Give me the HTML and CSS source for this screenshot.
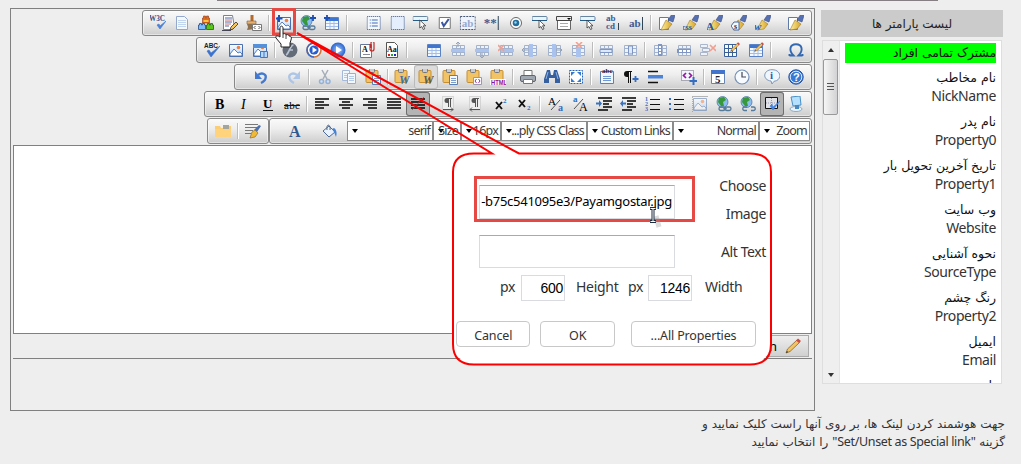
FILE: index.html
```html
<!DOCTYPE html>
<html lang="fa">
<head>
<meta charset="utf-8">
<title>Editor</title>
<link rel="stylesheet" href="styles.css">
</head>
<body>
<svg class="paints" aria-hidden="true">
  <defs>
    <linearGradient id="sky" x1="0" y1="0" x2="0" y2="1"><stop offset="0" stop-color="#fff"/><stop offset="1" stop-color="#a9cdf6"/></linearGradient>
    <radialGradient id="ball"><stop offset="0" stop-color="#9cc8ff"/><stop offset="1" stop-color="#2a62cc"/></radialGradient>
    <linearGradient id="gold" x1="0" y1="0" x2="1" y2="0"><stop offset="0" stop-color="#fff0a0"/><stop offset="1" stop-color="#d8a428"/></linearGradient>
  </defs>
</svg>
<svg class="sprite" aria-hidden="true">
  <symbol id="w3c" viewBox="0 0 16 16"><text x="-1" y="6" font-size="8" class="sb" textLength="16" lengthAdjust="spacingAndGlyphs" fill="#3a4f86">W3C</text><path d="M7 10l3 4 6-8-6 5-1-2z" fill="#4a80d8" stroke="#4a80d8" stroke-width=".7"/></symbol>
  <symbol id="abc" viewBox="0 0 16 16"><text x="0" y="6" font-size="7.500" class="ss b" textLength="14" lengthAdjust="spacingAndGlyphs" fill="#222">ABC</text><path d="M3 9l4 6 9-11-9 7-2-3z" fill="#3a72d0" stroke="#3a72d0" stroke-width=".6"/></symbol>
  <symbol id="doc" viewBox="0 0 16 16"><path d="M2.500 1.500h8l3 3v10h-11z" fill="#f4f9ff" stroke="#93a8cc"/><path d="M5 5v8M7 5v8M9 5v8M11 5v8" stroke="#8fb0e0" stroke-dasharray="1 1"/></symbol>
  <symbol id="bricks" viewBox="0 0 16 16"><path d="M4.500 3h1V1h2v2h1V1h2v2h1v5h-7z" fill="#e06a20" stroke="#8a3a20" stroke-width=".6"/><path d="M5.500 5h5v2h-5z" fill="#ffc33a"/><path d="M.5 10h1V8.500h2V10h1V8.500h2V10h1v4.500h-7z" fill="#7dbcff" stroke="#234a86" stroke-width=".8"/><path d="M8.500 10h1V8.500h2V10h1V8.500h2V10h1v4.500h-7z" fill="#59c519" stroke="#236010" stroke-width=".8"/></symbol>
  <symbol id="note" viewBox="0 0 16 16"><path d="M1.500.5h9l2 12-2 2h-9z" fill="#fff" stroke="#7a8190"/><path d="M3 3h7M3 7h7M3 11h4" stroke="#4a67a8"/><path d="M3 5h7M3 9h6" stroke="#d07070"/><path d="M8 15l1-3 5-5 2 2-5 5z" fill="#f5c75a" stroke="#3d3020" stroke-width=".8"/><path d="M0 15.500h9" stroke="#445"/></symbol>
  <symbol id="brushcode" viewBox="0 0 16 16"><path d="M4.500-1h3v7h-3z" fill="#b46a2a"/><path d="M1 6h9v3H1z" fill="#e6b070" stroke="#8a5a28" stroke-width=".6"/><path d="M1 9h9l-1 5-8 1 1-3z" fill="#8d7050"/><path d="M6.500 9.500h9v6h-9z" fill="#fff" stroke="#777"/><path d="M9.500 11L8 12.500 9.500 14M12.500 11l1.500 1.500-1.500 1.500" fill="none" stroke="#222" stroke-width=".8"/></symbol>
  <symbol id="pic" viewBox="0 0 16 16"><path d="M1.500 2.500h13v12h-13z" fill="url(#sky)" stroke="#4b6fae"/><path d="M2 12l4-5 4 4 2-1 2 2v2H2z" fill="#fff" stroke="#4773b5" stroke-width=".9"/><circle cx="10.500" cy="5.500" r="1.800" fill="#ef8040"/></symbol>
  <symbol id="addpic" viewBox="0 0 16 16"><use href="#pic"/><path d="M3 0v7M-.5 3.500h7" stroke="#1d4fb4" stroke-width="2"/></symbol>
  <symbol id="pic2" viewBox="0 0 16 16"><use href="#pic"/><path d="M1 2h14v4H1z" fill="#5590d8"/><path d="M8.500 9.500h7v6h-7zM12 9.500v6" fill="#b9d8fb" stroke="#3e78c4"/></symbol>
  <symbol id="globelink" viewBox="0 0 16 16"><circle cx="6.500" cy="6" r="5.500" fill="#8bbcf0" stroke="#467090" stroke-width=".7"/><path d="M3 2l5-1 2 3-3 2 1 4-3 0-3-4z" fill="#36983a"/><rect x="3" y="11" width="6" height="3.500" rx="1.700" fill="none" stroke="#547b9c" stroke-width="1.300"/><rect x="9" y="11" width="6" height="3.500" rx="1.700" fill="none" stroke="#547b9c" stroke-width="1.300"/><path d="M7 12.800h4" stroke="#547b9c"/></symbol>
  <symbol id="addlink" viewBox="0 0 16 16"><use href="#globelink"/><path d="M13 0v6M10 3h6" stroke="#1d4fb4" stroke-width="1.800"/></symbol>
  <symbol id="unlink" viewBox="0 0 16 16"><circle cx="6.500" cy="6" r="5.500" fill="#8bbcf0" stroke="#467090" stroke-width=".7"/><path d="M3 2l5-1 2 3-3 2 1 4-3 0-3-4z" fill="#36983a"/><path d="M7 11H4.500a1.500 1.500 0 000 3.500H7M11 11h2.500a1.500 1.500 0 010 3.500H11" fill="none" stroke="#547b9c" stroke-width="1.300"/></symbol>
  <symbol id="table" viewBox="0 0 16 16"><path d="M1.500 2.500h13v12h-13z" fill="#f4f9ff" stroke="#5b82c2"/><path d="M2 3h12v3H2z" fill="#3d76d2"/><path d="M2 8.500h12M2 11.500h12M6 6v8M10 6v8" stroke="#a3bfe8"/></symbol>
  <symbol id="addtable" viewBox="0 0 16 16"><use href="#table"/><path d="M3 0v6M0 3h6" stroke="#1d4fb4" stroke-width="1.800"/></symbol>
  <symbol id="form" viewBox="0 0 16 16"><path d="M1.500 1.500h13v13h-13z" fill="#f4f8ff" stroke="#35568f" stroke-dasharray="1 1"/><path d="M4 5h1M4 8h1M4 11h1M6 5h6M6 8h6M6 11h6" stroke="#3e6cb8"/></symbol>
  <symbol id="frame" viewBox="0 0 16 16"><path d="M1.500 1.500h13v13h-13z" fill="#e4eefc" stroke="#35568f" stroke-dasharray="1 1"/></symbol>
  <symbol id="btn" viewBox="0 0 16 16"><rect x="0" y="1.500" width="15" height="4" rx="1" fill="#eaf4ff" stroke="#6585a0"/><path d="M0 5.500h15" stroke="#245a83"/><path d="M7 5v8l2-1.500 1.500 3 1.500-.7-1.500-3H13z" fill="#fff" stroke="#333" stroke-width=".8"/></symbol>
  <symbol id="check" viewBox="0 0 16 16"><path d="M2.500 2.500h11v11h-11z" fill="#fff" stroke="#777"/><path d="M5 7l2 4 5-7" fill="none" stroke="#3a57a0" stroke-width="2"/></symbol>
  <symbol id="hidden" viewBox="0 0 16 16"><path d="M.5 1.500h15v13H.5z" fill="#eef3fc" stroke="#445577" stroke-dasharray="2 1"/><text x="2" y="12" font-size="11" class="sb" fill="#98a8cf">ab</text></symbol>
  <symbol id="pass" viewBox="0 0 16 16"><text x="0" y="12" font-size="13" class="sb" fill="#405a98">**</text><path d="M14.500 1v14" stroke="#345"/></symbol>
  <symbol id="radio" viewBox="0 0 16 16"><circle cx="8" cy="8" r="5.500" fill="#fff" stroke="#666"/><circle cx="8" cy="8" r="3.300" fill="#236e9c"/><circle cx="7.500" cy="7.500" r="1.200" fill="#8fd5f0"/></symbol>
  <symbol id="list" viewBox="0 0 16 16"><path d="M.5 1.500h15v4H.5z" fill="#eee" stroke="#444"/><path d="M11 3h4l-2 2z" fill="#000"/><path d="M1.500 6v8.500h13V6" fill="#fff" stroke="#666"/><path d="M4 8.500h8M4 11.500h8" stroke="#aaa"/></symbol>
  <symbol id="area" viewBox="0 0 16 16"><text x="2" y="6" font-size="9" class="sb" fill="#3e5994">ab</text><text x="2" y="14" font-size="9" class="sb" fill="#3e5994">cd</text><path d="M14.500 8v7" stroke="#345"/></symbol>
  <symbol id="field" viewBox="0 0 16 16"><text x="1" y="12" font-size="11" class="sb" fill="#3e5994">ab</text><path d="M14.500 2v13" stroke="#345"/></symbol>
  <symbol id="brush" viewBox="0 0 16 16"><path d="M9 5l4-6 3 1.500-2 6.500z" fill="#5571b4" stroke="#3c4e80" stroke-width=".6"/><path d="M7 5l6 4-4 5-7 1 3-6z" fill="url(#gold)" stroke="#9a7b28" stroke-width=".6"/></symbol>
  <symbol id="bpage" viewBox="0 0 16 16"><path d="M.5 2.500h9v12h-9z" fill="#fff" stroke="#607ba8"/><use href="#brush"/></symbol>
  <symbol id="bcss" viewBox="0 0 16 16"><use href="#brush"/><text x="-1" y="15" font-size="8" class="sb" fill="#2855a5">css</text></symbol>
  <symbol id="bfont" viewBox="0 0 16 16"><use href="#brush"/><text x="-1" y="15" font-size="11" class="sb" fill="#2855a5">A</text></symbol>
  <symbol id="btag" viewBox="0 0 16 16"><use href="#brush"/><path d="M0 11l3-4h5v8H3z" fill="#f4f8ff" stroke="#47699b"/><text x="3" y="14" font-size="8" class="sb" fill="#234">s</text></symbol>
  <symbol id="bword" viewBox="0 0 16 16"><use href="#brush"/><text x="-1" y="15" font-size="11" class="sb it" fill="#2861bd">w</text></symbol>
  <symbol id="flash" viewBox="0 0 16 16"><circle cx="8" cy="8" r="7.500" fill="#646b78"/><path d="M11.500 3C8 3 7 12 4 13M7 8h4" fill="none" stroke="#b9c4d4" stroke-width="1.700"/></symbol>
  <symbol id="media" viewBox="0 0 16 16"><circle cx="8" cy="8" r="7" fill="#fff" stroke="#d0763c" stroke-width="1.600"/><path d="M8 1a7 7 0 000 14" fill="none" stroke="#3a6cc8" stroke-width="1.600"/><circle cx="8" cy="8" r="4.600" fill="#285ed0"/><path d="M6.500 5l4.500 3-4.500 3z" fill="#fff"/></symbol>
  <symbol id="play" viewBox="0 0 16 16"><circle cx="8" cy="8" r="7.500" fill="url(#ball)"/><path d="M6 4l6 4-6 4z" fill="#fff"/></symbol>
  <symbol id="attach" viewBox="0 0 16 16"><path d="M.5 2.500h11v13H.5z" fill="#fff" stroke="#66789a"/><text x="2" y="10" font-size="8" class="sb" fill="#111">A</text><path d="M3 12.500h7" stroke="#889"/><path d="M10 2v5a2 2 0 004 0V1a1.500 1.500 0 00-3 0v5" fill="none" stroke="#bd2a2a" stroke-width="1.200"/></symbol>
  <symbol id="fontdoc" viewBox="0 0 16 16"><path d="M2.500.5h8l3 3v12h-11z" fill="#fff" stroke="#555"/><text x="3" y="10" font-size="8" class="sb" fill="#111">Aa</text><path d="M4 12h2v2H4z" fill="#d22"/><path d="M7 12h2v2H7z" fill="#2a2"/><path d="M10 12h2v2h-2z" fill="#22c"/></symbol>
  <symbol id="grid" viewBox="0 0 16 16"><path d="M2.500 3.500h12v10h-12z" fill="#edf3fc" stroke="#a3b2cd"/><path d="M2 6.500h12M2 10.500h12M6.500 3v10M10.500 3v10" stroke="#a3b2cd"/></symbol>
  <symbol id="rowup" viewBox="0 0 16 16"><use href="#grid"/><path d="M1 7h14v3H1z" fill="#a9c3ee"/><path d="M8 0v5M6 2l2-2 2 2" fill="none" stroke="#96a2b6"/></symbol>
  <symbol id="rowdn" viewBox="0 0 16 16"><use href="#grid"/><path d="M1 7h14v3H1z" fill="#a9c3ee"/><path d="M8 11v5M6 14l2 2 2-2" fill="none" stroke="#96a2b6"/></symbol>
  <symbol id="rowdel" viewBox="0 0 16 16"><use href="#grid"/><path d="M3 7h13v3H3z" fill="#a9c3ee"/><path d="M0 3l6 6M6 3L0 9" stroke="#f0a090" stroke-width="1.600"/></symbol>
  <symbol id="colleft" viewBox="0 0 16 16"><use href="#grid"/><path d="M7 2h4v13H7z" fill="#a9c3ee"/><path d="M6 8H0M2 6L0 8l2 2" fill="none" stroke="#96a2b6"/></symbol>
  <symbol id="colright" viewBox="0 0 16 16"><use href="#grid"/><path d="M6 2h4v13H6z" fill="#a9c3ee"/><path d="M10 8h6M14 6l2 2-2 2" fill="none" stroke="#96a2b6"/></symbol>
  <symbol id="coldel" viewBox="0 0 16 16"><use href="#grid"/><path d="M6 5h5v10H6z" fill="#a9c3ee"/><path d="M6 0l6 6M12 0L6 6" stroke="#f0a090" stroke-width="1.600"/></symbol>
  <symbol id="cell" viewBox="0 0 16 16"><use href="#grid"/><path d="M2 7.500h12v3H2z" fill="#dce8fb" stroke="#7f96c2"/></symbol>
  <symbol id="cellv" viewBox="0 0 16 16"><use href="#grid"/><path d="M6.500 4v8h4V4z" fill="#dce8fb" stroke="#7f96c2"/></symbol>
  <symbol id="splitv" viewBox="0 0 16 16"><use href="#grid"/><path d="M6 2h4v12H6z" fill="#7f96c2"/><path d="M7 4h2v2H7zM7 7h2v2H7zM7 10h2v2H7z" fill="#fff"/></symbol>
  <symbol id="splith" viewBox="0 0 16 16"><use href="#grid"/><path d="M1 7h14v4H1z" fill="#7f96c2"/><path d="M3 8h3v2H3zM7 8h3v2H7zM11 8h3v2h-3z" fill="#fff"/></symbol>
  <symbol id="celldel" viewBox="0 0 16 16"><path d="M.5 2.500h7v3h-7zM.5 10.500h7v3h-7zM2.500 6.500h7v3h-7z" fill="#eef3fb" stroke="#aab6cb"/><path d="M10 3l6 6M16 3l-6 6" stroke="#f0a090" stroke-width="1.600"/></symbol>
  <symbol id="pencil" viewBox="0 0 16 16"><path d="M1 15l1.500-4L12 2l2.500 2.500L5 13.500z" fill="#f3c560" stroke="#8a6332" stroke-width=".8"/><path d="M11 2.500L13 .5 16 3l-2 2z" fill="#ca4e45"/><path d="M1 15l1-2 1 1z" fill="#222"/></symbol>
  <symbol id="celledit" viewBox="0 0 16 16"><path d="M.5 2.500h12v12H.5zM.500 6.500h12M.500 10.500h12M4.500 3v12M8.500 3v12" fill="#f6faff" stroke="#3a5e96"/><svg x="6" y="0" width="10" height="10"><use href="#pencil"/></svg></symbol>
  <symbol id="tabedit" viewBox="0 0 16 16"><use href="#table"/><svg x="6" y="0" width="10" height="10"><use href="#pencil"/></svg></symbol>
  <symbol id="omega" viewBox="0 0 16 16"><path d="M1.500 13.500h4C2.500 10.500 2 8.500 2.500 6 3.500 1 12.500 1 13.500 6c.5 2.500 0 4.500-3 7.500h4M1.500 14v-2M14.500 14v-2" fill="none" stroke="#3268b2" stroke-width="1.900"/></symbol>
  <symbol id="undo" viewBox="0 0 16 16"><path d="M5 6c4-3 9-1 7.500 3.500-.5 2-2 3.500-4.500 4.500" fill="none" stroke="#437ad0" stroke-width="2.300"/><path d="M2 2v8h7z" fill="#437ad0"/></symbol>
  <symbol id="redo" viewBox="0 0 16 16"><path d="M11 6C7 3 2 5 3.500 9.500c.5 2 2 3.500 4.500 4.500" fill="none" stroke="#adc5e7" stroke-width="2.300"/><path d="M14 2v8H7z" fill="#adc5e7"/></symbol>
  <symbol id="cut" viewBox="0 0 16 16"><path d="M5 1l5 9M11 1L6 10" stroke="#a5adb9" stroke-width="1.500"/><circle cx="4.500" cy="12.500" r="2" fill="none" stroke="#92b2dd" stroke-width="1.500"/><circle cx="11" cy="12.500" r="2" fill="none" stroke="#92b2dd" stroke-width="1.500"/></symbol>
  <symbol id="copy" viewBox="0 0 16 16"><path d="M1.500 1.500h7v10h-7z" fill="#f3f8ff" stroke="#a4b9da"/><path d="M6.500 4.500h8v10h-8z" fill="#f3f8ff" stroke="#98afd3"/><path d="M8 7.500h5M8 9.500h5M8 11.500h5M3 4.500h4M3 6.500h3M3 8.500h3" stroke="#b2cbe9"/></symbol>
  <symbol id="clip" viewBox="0 0 16 16"><rect x="1" y="1.500" width="12" height="12" rx="1" fill="#f2c365" stroke="#c58f35"/><rect x="4.500" y="-.5" width="5" height="4" rx="1" fill="#c8ccd2" stroke="#737780"/></symbol>
  <symbol id="paste" viewBox="0 0 16 16"><use href="#clip"/><path d="M7.500 6.500h8v9h-8z" fill="#f4f9ff" stroke="#5b7faf"/><path d="M9 9.500h5M9 11.500h5M9 13.500h5" stroke="#7d9dcb"/></symbol>
  <symbol id="pword" viewBox="0 0 16 16"><use href="#clip"/><text x="5" y="15" font-size="12" class="sb it" fill="#376dbb">W</text></symbol>
  <symbol id="pword2" viewBox="0 0 16 16"><use href="#clip"/><text x="5" y="15" font-size="12" class="sb it" fill="#5c5a57">W</text></symbol>
  <symbol id="pcode" viewBox="0 0 16 16"><use href="#clip"/><path d="M7.500 8.500h8v7h-8z" fill="#fff" stroke="#99a"/><path d="M10.500 10L9 12l1.500 2M12.500 10l1.500 2-1.500 2" fill="none" stroke="#a52bb0"/></symbol>
  <symbol id="phtml" viewBox="0 0 16 16"><use href="#clip"/><path d="M0 10h17v6H0z" fill="#fff"/><text x="1" y="15.500" font-size="6.500" class="ss b" textLength="16" lengthAdjust="spacingAndGlyphs" fill="#8c1299">HTML</text></symbol>
  <symbol id="print" viewBox="0 0 16 16"><path d="M4 1.500h8v5H4z" fill="#fff" stroke="#777"/><rect x=".5" y="6.500" width="15" height="6" rx="1.500" fill="#a2a8b1" stroke="#60656d"/><path d="M3.500 10.500h9v4h-9z" fill="#fff" stroke="#777"/><path d="M12 8.500h2" stroke="#77cc33"/></symbol>
  <symbol id="find" viewBox="0 0 16 16"><path d="M3 1h3l1 5h2l1-5h3l3 9v4h-5V9H5v5H0v-4z" fill="#365f9f"/><path d="M4 3L2 10M12 3l2 7" stroke="#8db4e6"/></symbol>
  <symbol id="selall" viewBox="0 0 16 16"><path d="M1.500 1.500h13v13h-13z" fill="#fff" stroke="#2764b2" stroke-dasharray="2 1"/><path d="M3 3h4L3 7zM13 3v4L9 3zM3 13V9l4 4zM13 13H9l4-4z" fill="#327ad2"/></symbol>
  <symbol id="spell" viewBox="0 0 16 16"><path d="M1.500 2.500h13v12h-13z" fill="#eff6ff" stroke="#5e7fae"/><path d="M4 7.500h8M4 9.500h8M4 11.500h8" stroke="#7399d3"/><text x="3" y="4" font-size="7" class="sb" fill="#224">abc</text></symbol>
  <symbol id="para" viewBox="0 0 16 16"><path d="M9 2H4a3 3 0 000 6h1v6h1V3h1v11h1V3h1z" fill="#111"/><path d="M12.500 7v6M9.500 10h6" stroke="#356dc1" stroke-width="1.800"/></symbol>
  <symbol id="hr" viewBox="0 0 16 16"><path d="M1 2.500h10M1 13.500h10" stroke="#111" stroke-width="1.500"/><path d="M1 6h15v3.500H1z" fill="#4a83d8"/></symbol>
  <symbol id="special" viewBox="0 0 16 16"><path d="M.5 1.500h12v10H.5z" fill="#f4f4ff" stroke="#667" stroke-dasharray="1 1"/><path d="M5 4L2.500 6.500 5 9M8 4l2.500 2.500L8 9" fill="none" stroke="#8e1b9c" stroke-width="1.700"/><path d="M12.500 8v8M8.500 12h8" stroke="#356dc1" stroke-width="2"/></symbol>
  <symbol id="date" viewBox="0 0 16 16"><path d="M1.500 1.500h13v13h-13z" fill="#fff" stroke="#6783b2"/><path d="M1 1h14v4H1z" fill="#4374cd"/><text x="5" y="14" font-size="11" class="sb" fill="#223">5</text></symbol>
  <symbol id="clock" viewBox="0 0 16 16"><circle cx="8" cy="8" r="7" fill="#f7fbff" stroke="#7590b7" stroke-width="1.200"/><path d="M8 3v5h4" fill="none" stroke="#445" stroke-width="1.200"/></symbol>
  <symbol id="info" viewBox="0 0 16 16"><path d="M8 .7c10 0 10 11 2 11.600L8 15l-1-3C-2 11-1 .7 8 .7z" fill="#eef6ff" stroke="#8098b8"/><text x="6" y="10" font-size="11" class="sb" fill="#325da7">i</text></symbol>
  <symbol id="help" viewBox="0 0 16 16"><circle cx="8" cy="8" r="7.200" fill="#3879d6" stroke="#234f9e"/><circle cx="8" cy="8" r="5.800" fill="none" stroke="#dbe9fb"/><text x="5" y="12" font-size="11" class="ss b" fill="#fff">?</text></symbol>
  <symbol id="bold" viewBox="0 0 16 16"><text x="3" y="13" font-size="14" class="sb">B</text></symbol>
  <symbol id="ital" viewBox="0 0 16 16"><text x="5" y="13" font-size="14" class="st it">I</text></symbol>
  <symbol id="under" viewBox="0 0 16 16"><text x="3" y="12" font-size="13" class="sb">U</text><path d="M3 14.500h10" stroke="#111"/></symbol>
  <symbol id="strike" viewBox="0 0 16 16"><text x="0" y="13" font-size="11" class="st" textLength="16">abc</text><path d="M0 9.500h16" stroke="#111"/></symbol>
  <symbol id="al" viewBox="0 0 16 16"><path d="M1 3h14M1 6h9M1 9h14M1 12h9" stroke="#000" stroke-width="1.400"/></symbol>
  <symbol id="ac" viewBox="0 0 16 16"><path d="M1 3h14M4 6h8M1 9h14M4 12h8" stroke="#000" stroke-width="1.400"/></symbol>
  <symbol id="ar" viewBox="0 0 16 16"><path d="M1 3h14M6 6h9M1 9h14M6 12h9" stroke="#000" stroke-width="1.400"/></symbol>
  <symbol id="aj" viewBox="0 0 16 16"><path d="M1 3h14M1 6h14M1 9h14M1 12h14" stroke="#000" stroke-width="1.400"/></symbol>
  <symbol id="an" viewBox="0 0 16 16"><use href="#aj"/><path d="M2 14L14 1" stroke="#e22" stroke-width=".8"/></symbol>
  <symbol id="ltr" viewBox="0 0 16 16"><path d="M2.500.5h11v14h-11z" fill="#eee" stroke="#bbb" stroke-dasharray="1 1"/><path d="M12 2H7a2.500 2.500 0 000 5h1v4h1V3h1v8h1V3h1z" fill="#555"/><path d="M3 13.500h10M11 11.500l2 2-2 2" stroke="#555" fill="none"/></symbol>
  <symbol id="rtl" viewBox="0 0 16 16"><path d="M2.500.5h11v14h-11z" fill="#eee" stroke="#bbb" stroke-dasharray="1 1"/><path d="M12 2H7a2.500 2.500 0 000 5h1v4h1V3h1v8h1V3h1z" fill="#555"/><path d="M3 13.500h10M5 11.500l-2 2 2 2" stroke="#555" fill="none"/></symbol>
  <symbol id="sup" viewBox="0 0 16 16"><path d="M3 6l6 7M9 6l-6 7" stroke="#111" stroke-width="1.900"/><text x="10" y="7" font-size="7" class="sb" fill="#356dc1">2</text></symbol>
  <symbol id="sub" viewBox="0 0 16 16"><path d="M2 4l6 7M8 4l-6 7" stroke="#111" stroke-width="1.900"/><text x="10" y="14" font-size="7" class="sb" fill="#356dc1">2</text></symbol>
  <symbol id="lower" viewBox="0 0 16 16"><text x="0" y="9" font-size="11" class="st">A</text><path d="M3 14L12 4" stroke="#555"/><text x="10" y="15" font-size="10" class="sb" fill="#356dc1">a</text></symbol>
  <symbol id="upper" viewBox="0 0 16 16"><text x="1" y="6" font-size="9" class="sb" fill="#356dc1">a</text><path d="M2 13L11 3" stroke="#555"/><text x="7" y="15" font-size="12" class="st">A</text></symbol>
  <symbol id="indent" viewBox="0 0 16 16"><path d="M2 2h14M7 5h9M7 8h6M7 11h9M2 14h10" stroke="#000" stroke-width="1.300"/><path d="M0 6.500h3V4l3 3.500L3 11V8.500H0z" fill="#3c72bb"/></symbol>
  <symbol id="outdent" viewBox="0 0 16 16"><path d="M2 2h14M7 5h9M7 8h6M7 11h9M2 14h10" stroke="#000" stroke-width="1.300"/><path d="M6 6.500H3V4L0 7.500 3 11V8.500h3z" fill="#3c72bb"/></symbol>
  <symbol id="ol" viewBox="0 0 16 16"><path d="M6 3.500h10M6 8.500h10M6 13.500h10" stroke="#111" stroke-width="1.200"/><text x="1" y="5" font-size="6" class="sb" fill="#356dc1">1</text><text x="1" y="10" font-size="6" class="sb" fill="#356dc1">2</text><text x="1" y="15" font-size="6" class="sb" fill="#356dc1">3</text></symbol>
  <symbol id="ul" viewBox="0 0 16 16"><path d="M6 3.500h10M6 8.500h10M6 13.500h10" stroke="#111" stroke-width="1.200"/><path d="M1 2h2v2H1zM1 7h2v2H1zM1 12h2v2H1z" fill="#356dc1"/></symbol>
  <symbol id="abs" viewBox="0 0 16 16"><g opacity=".5"><use href="#pic"/></g><path d="M0 16V.5h16" fill="none" stroke="#777" stroke-dasharray="1 1"/></symbol>
  <symbol id="borders" viewBox="0 0 16 16"><path d="M1.500 1.500h12v11h-12z" fill="#e0e2e8" stroke="#111"/><path d="M7.500 2v10M2 7h11" stroke="#99a" stroke-dasharray="1 1"/><path d="M6 10l3 4 7-9-7 6-1-3z" fill="#4383e4" stroke="#4383e4" stroke-width=".6"/></symbol>
  <symbol id="screen" viewBox="0 0 16 16"><path d="M3 1l9-1 1 9-8 1z" fill="#b5e0ff" stroke="#488fc7"/><ellipse cx="8" cy="13" rx="6" ry="2.500" fill="#e7f3fd" stroke="#8fa9bd"/><path d="M7 9h4v4H7z" fill="#4a89c0"/></symbol>
  <symbol id="folder" viewBox="0 0 16 16"><path d="M0 3h5l1 2h2V3h8v11H0z" fill="#fbce74"/><path d="M8 2h6v4H8z" fill="#a5a5a0"/><path d="M0 6h16v8H0z" fill="#ffd27c"/></symbol>
  <symbol id="style" viewBox="0 0 16 16"><path d="M0 1.500h13M0 4.500h13M0 7.500h8M0 10.500h6" stroke="#777"/><path d="M9 7l5-5 2 1-4 6z" fill="#4e71ac"/><path d="M5 15l2-6 3-2 3 3-3 4z" fill="#f0ba37" stroke="#91702c" stroke-width=".7"/></symbol>
  <symbol id="color" viewBox="0 0 16 16"><text x="2" y="14" font-size="16" class="sb" fill="#31588f">A</text></symbol>
  <symbol id="bucket" viewBox="0 0 16 16"><path d="M2 8l6-5 6 6-6 5z" fill="#e9f2ff" stroke="#4c6b9b"/><path d="M6 7c-1-7 4-6 3 0" fill="none" stroke="#567"/><path d="M13 5c3 2 3 6 2 9l-2-5-2-3z" fill="#4684d7"/></symbol>
</svg>

<div class="topline"></div>
<main class="page">
  <section class="editor">
    <div class="bar r1">
      <svg><use href="#w3c"/></svg><svg><use href="#doc"/></svg><svg><use href="#bricks"/></svg><svg><use href="#note"/></svg><svg><use href="#brushcode"/></svg>
      <i class="sep s6"></i><svg><use href="#addpic"/></svg><svg><use href="#addlink"/></svg><svg><use href="#addtable"/></svg>
      <i class="sep s18"></i><span class="tight"><svg><use href="#form"/></svg><svg><use href="#frame"/></svg><svg><use href="#btn"/></svg><svg><use href="#check"/></svg><svg><use href="#hidden"/></svg><svg><use href="#pass"/></svg></span>
      <i class="gap g1"></i><svg><use href="#radio"/></svg><svg><use href="#btn"/></svg><svg><use href="#list"/></svg><svg><use href="#btn"/></svg><svg><use href="#area"/></svg><svg><use href="#field"/></svg>
      <i class="sep s7"></i><svg><use href="#bpage"/></svg><svg><use href="#bcss"/></svg><svg><use href="#bfont"/></svg><svg><use href="#btag"/></svg><svg><use href="#bword"/></svg>
      <i class="gap g9"></i><svg><use href="#bpage"/></svg>
    </div>
    <div class="bar r2">
      <svg><use href="#abc"/></svg><svg><use href="#pic"/></svg><svg><use href="#pic2"/></svg>
      <i class="sep s6"></i><svg><use href="#flash"/></svg><svg><use href="#media"/></svg><svg><use href="#play"/></svg>
      <i class="sep s6"></i><svg><use href="#attach"/></svg><svg><use href="#fontdoc"/></svg>
      <i class="sep s18"></i><svg><use href="#table"/></svg><svg><use href="#rowup"/></svg><svg><use href="#rowdn"/></svg><svg><use href="#rowdel"/></svg><svg><use href="#colleft"/></svg><svg><use href="#colright"/></svg><svg><use href="#coldel"/></svg>
      <i class="sep s4"></i><svg><use href="#cell"/></svg><svg><use href="#cellv"/></svg>
      <i class="sep s6"></i><svg><use href="#splitv"/></svg><svg><use href="#splith"/></svg><svg><use href="#celldel"/></svg><svg><use href="#celledit"/></svg><svg><use href="#tabedit"/></svg>
      <i class="sep s16"></i><svg><use href="#omega"/></svg>
    </div>
    <div class="bar r3">
      <svg><use href="#undo"/></svg><i class="gap g9"></i><svg><use href="#redo"/></svg>
      <i class="sep s7"></i><svg><use href="#cut"/></svg><svg><use href="#copy"/></svg><svg><use href="#paste"/></svg>
      <i class="sep s5"></i><svg><use href="#pword"/></svg><svg class="hover"><use href="#pword2"/></svg><svg><use href="#paste"/></svg><svg><use href="#pcode"/></svg><svg><use href="#phtml"/></svg>
      <i class="sep s6"></i><svg><use href="#print"/></svg><svg><use href="#find"/></svg><svg><use href="#selall"/></svg>
      <i class="sep s7"></i><svg><use href="#spell"/></svg><svg><use href="#para"/></svg><svg><use href="#hr"/></svg>
      <i class="gap g10"></i><svg><use href="#special"/></svg>
      <i class="sep s5"></i><svg><use href="#date"/></svg><svg><use href="#clock"/></svg>
      <i class="sep s6"></i><svg><use href="#info"/></svg><svg><use href="#help"/></svg>
    </div>
    <div class="bar r4">
      <svg><use href="#bold"/></svg><svg><use href="#ital"/></svg><svg><use href="#under"/></svg><svg><use href="#strike"/></svg>
      <i class="sep s6"></i><svg><use href="#al"/></svg><svg><use href="#ac"/></svg><svg><use href="#ar"/></svg><svg><use href="#aj"/></svg><svg class="on"><use href="#an"/></svg>
      <i class="gap g6"></i><svg><use href="#ltr"/></svg><i class="gap g3"></i><svg><use href="#rtl"/></svg>
      <i class="gap g2"></i><svg><use href="#sup"/></svg><svg><use href="#sub"/></svg>
      <i class="sep s7"></i><svg><use href="#lower"/></svg><svg><use href="#upper"/></svg><svg><use href="#indent"/></svg><svg><use href="#outdent"/></svg><svg><use href="#ol"/></svg><svg><use href="#ul"/></svg><svg><use href="#abs"/></svg><svg><use href="#globelink"/></svg><svg><use href="#unlink"/></svg><svg class="on"><use href="#borders"/></svg><svg><use href="#screen"/></svg>
    </div>
    <div class="lastrow">
      <div class="bar r5a"><svg><use href="#folder"/></svg><i class="sep s6"></i><svg><use href="#style"/></svg></div>
      <div class="bar r5b">
        <svg><use href="#color"/></svg><i class="gap g10"></i><svg><use href="#bucket"/></svg>
        <div class="sel w84"><b></b><span>serif</span></div>
        <div class="sel w26"><b></b><span>Size</span></div>
        <div class="sel w38"><b></b><span>16px</span></div>
        <div class="sel w84"><b></b><span>...ply CSS Class</span></div>
        <div class="sel w84"><b></b><span>Custom Links</span></div>
        <div class="sel w84"><b></b><span>Normal</span></div>
        <div class="sel w49"><b></b><span>Zoom</span></div>
      </div>
    </div>
    <div class="canvas"></div>
    <div class="modes"><div class="mode"><span>n</span><svg><use href="#pencil"/></svg></div></div>
  </section>

  <aside class="side" dir="rtl">
    <h2>لیست پارامتر ها</h2>
    <div class="params">
      <div class="items">
        <div class="group">مشترک تمامی افراد</div>
        <dl><dt>نام مخاطب</dt><dd>NickName</dd></dl>
        <dl><dt>نام پدر</dt><dd>Property0</dd></dl>
        <dl><dt>تاریخ آخرین تحویل بار</dt><dd>Property1</dd></dl>
        <dl><dt>وب سایت</dt><dd>Website</dd></dl>
        <dl><dt>نحوه آشنایی</dt><dd>SourceType</dd></dl>
        <dl><dt>رنگ چشم</dt><dd>Property2</dd></dl>
        <dl><dt>ایمیل</dt><dd>Email</dd></dl>
        <dl><dt>تلفن</dt></dl>
      </div>
      <div class="scroll"><b class="up"></b><div class="thumb"><i></i></div><b class="down"></b></div>
    </div>
  </aside>
</main>
<footer class="hint" dir="rtl"><p>جهت هوشمند کردن لینک ها، بر روی آنها راست کلیک نمایید و</p><p>گزینه <bdi>"Set/Unset as Special link"</bdi> را انتخاب نمایید</p></footer>

<div class="dialog">
  <div class="line first"><div class="mark"><div class="input url">-b75c541095e3/Payamgostar.jpg</div></div><div class="label two">Choose<br>Image</div></div>
  <div class="line"><div class="input alt"></div><div class="label">Alt Text</div></div>
  <div class="size"><span class="px">px</span><div class="input num">600</div><span class="lh">Height</span><span class="px2">px</span><div class="input num">1246</div><span class="lw">Width</span></div>
  <div class="actions"><button>Cancel</button><button>OK</button><button class="all">...All Properties</button></div>
</div>
<svg class="overlay" width="1021" height="464" viewBox="0 0 1021 464">
  <path d="M492 153.500H474Q453 153.500 453 172V344Q453 364.500 474 364.500H750Q771 364.500 771 344V172Q771 153.500 750 153.500H519L297 33Z" fill="none" stroke="#fb0000" stroke-width="2"/>
  <rect x="273.500" y="9.500" width="21" height="24.500" fill="none" stroke="#e64843" stroke-width="3"/>
  <path d="M280 28c0-2.500 3-2.500 3 0v6c2-1 3 0 3 1 2-1 3 0 3 1 2 0 3 1 2 4l-1 3v4h-9v-3l-5-6c-1-2 1-3 4-1z" fill="#fff" stroke="#222"/><path d="M283 34v4M286 35v4" stroke="#444"/>
  <path d="M656 216l3 11" stroke="#999" stroke-width="5" opacity=".35"/>
  <path d="M650 208.500h6M650 221.500h6M653 209v12" fill="none" stroke="#1c2b3f" stroke-width="3"/><path d="M653 209v12M650.500 208.500h5M650.500 221.500h5" stroke="#fff"/>
</svg>
</body>
</html>
```
FILE: styles.css
```css
* { box-sizing: border-box; }
body { margin: 0; width: 1021px; height: 464px; overflow: hidden; background: #eee; color: #333; font: 13px/18px "Noto Sans", sans-serif; }
.paints { position: absolute; width: 0; height: 0; }
.sprite { display: none; }
.st { font-family: "Liberation Serif", serif; }
.sb { font-family: "Liberation Serif", serif; font-weight: bold; }
.ss { font-family: "Liberation Sans", sans-serif; }
.it { font-style: italic; }
.b { font-weight: bold; }
.topline { width: 721px; height: 1px; margin-left: 217px; background: #857f83; }
.page { display: flex; align-items: flex-start; padding: 7px 0 0 10px; height: 405px; }

.editor { width: 805px; height: 403px; border: 1px solid #808080; padding: 1px 2px; display: flex; flex-direction: column; align-items: flex-end; }
.bar { display: flex; align-items: center; height: 26px; margin-bottom: 1px; padding: 0 3px; border: 1px solid #888; border-radius: 3px; background: linear-gradient(#fafafa, #eee 40%, #cdcdcd); box-shadow: inset 0 0 0 1px rgba(255,255,255,.45); flex: none; }
.bar svg { width: 24px; height: 24px; padding: 4px; flex: none; overflow: visible; }
.tight { display: flex; width: 141px; }
.tight svg { width: 23.500px; padding: 4px 3.750px; }
.r3 { padding-left: 14px; }
.bar .hover { background: #dcdcdc; box-shadow: inset 0 0 0 1px #bbb; border-radius: 3px; }
.bar .on { background: #b4b4b4; box-shadow: inset 0 0 0 1px #6e6e6e; border-radius: 3px; }
.sep, .gap { flex: none; }
.sep { height: 16px; background: linear-gradient(90deg, transparent 2px, #bcbcbc 2px 3px, #fff 3px 4px, transparent 4px); }
.g1 { width: 1px; } .g2 { width: 2px; } .g3 { width: 3px; } .g6 { width: 6px; } .g9 { width: 9px; } .g10 { width: 10px; }
.s4 { width: 4px; } .s5 { width: 5px; } .s6 { width: 6px; } .s7 { width: 7px; } .s16 { width: 16px; } .s18 { width: 18px; }
.lastrow { display: flex; }
.r5a { width: 62px; }
.r5b { width: 543px; padding: 0 3px 0 13px; }
.sel { display: flex; align-items: center; height: 20px; background: #fff; border: 1px solid #8b8b8b; font-size: 12.500px; letter-spacing: -.8px; line-height: 18px; white-space: nowrap; flex: none; padding-left: 4px; color: #3b3b3b; }
.sel b { width: 0; height: 0; border: 3px solid transparent; border-top: 4px solid #000; border-bottom: 0; flex: none; }
.sel span { flex: 1; text-align: right; margin-left: -20px; padding-right: 2px; }
.w84 { width: 86px; } .w26 { width: 28px; } .w38 { width: 40px; } .w49 { width: 51px; }
.r5b .g10 + svg { margin-right: 6px; }
.canvas { width: 799px; height: 189px; background: #fff; border: 1px solid #808080; flex: none; }
.modes { width: 799px; height: 25px; border-bottom: 1px solid #808080; padding: 1px 3px 1px 0; display: flex; justify-content: flex-end; }
.mode { width: 74px; height: 22px; border: 1px solid #aaa; background: linear-gradient(#eee, #d0d0d0); display: flex; align-items: center; justify-content: flex-end; color: #000; }
.mode svg { width: 16px; height: 16px; margin: 0 7px 0 8px; }

.side { margin: 2px 0 0 6px; width: 182px; }
.side h2 { margin: 0; height: 27px; background: #cbcbcb; font: 12px/29px "DejaVu Sans", sans-serif; text-align: center; color: #222; }
.params { display: flex; margin: 3px 1px 0; height: 344px; border: 1px solid #dedede; background: #fff; overflow: hidden; }
.items { width: 162px; padding: 2px 5px 0; }
.group { height: 20px; background: #0f0; color: #111; font: 12.300px/21px "DejaVu Sans", sans-serif; margin-bottom: 4px; }
dl { margin: 0; height: 44px; padding-top: 1px; }
dt { height: 18px; font: 12.500px/20px "DejaVu Sans", sans-serif; color: #111; white-space: nowrap; }
dd { margin: 0; height: 20px; font-size: 14px; line-height: 19px; direction: ltr; text-align: right; letter-spacing: -.4px; }
.scroll { width: 17px; background: #efefef; border-right: 1px solid #e4e4e4; display: flex; flex-direction: column; align-items: center; }
.scroll b { width: 0; height: 0; border: 3.500px solid transparent; }
.scroll .up { border-top: 0; border-bottom: 4px solid #333; margin: 7px 0; }
.scroll .down { border-bottom: 0; border-top: 4px solid #333; margin: auto 0 6px; }
.thumb { width: 15px; height: 56px; border: 1px solid #999; border-radius: 2px; background: linear-gradient(90deg, #f6f6f6, #d2d2d4); display: flex; align-items: center; justify-content: center; }
.thumb i { width: 7px; height: 8px; background: repeating-linear-gradient(#555 0 1px, transparent 1px 3px); }

.hint { padding: 10px 16px 0 0; color: #333; white-space: nowrap; }
.hint p { margin: 0; font: 12px/17px "DejaVu Sans", sans-serif; }
.hint bdi { font: 12.500px/17px "Noto Sans", sans-serif; letter-spacing: -.35px; }

.dialog { position: absolute; left: 453px; top: 153px; width: 318px; height: 211px; background: #fff; border-radius: 21px; padding: 23px 5px 0 21px; }
.line { display: flex; justify-content: space-between; align-items: center; font-size: 14px; }
.line .label { text-align: right; line-height: 28px; letter-spacing: -.4px; }
.line .two { padding-top: 2px; }
.first { height: 46px; }
.mark { width: 221px; height: 46px; border: 3px solid #e64843; padding: 6px 2px; }
.input { border: 1px solid #d9dbe0; background: #fff; color: #000; text-align: right; }
.url { width: 196px; height: 34px; padding-right: 2px; font-size: 13px; letter-spacing: -.28px; line-height: 31px; white-space: nowrap; border-top-color: #aaa; }
.alt { width: 196px; height: 33px; margin-left: 5px; border-top-color: #aaa; }
.line + .line { margin-top: 13px; height: 33px; }
.size { display: flex; align-items: center; height: 26px; margin-top: 7px; padding-left: 26px; font-size: 14px; letter-spacing: -.3px; }
.size span { padding-bottom: 3px; }
.num { width: 44px; height: 26px; padding-right: 1px; font: 14px/25px "Liberation Sans", sans-serif; }
.size .px { width: 21px; } .size .lh { width: 63px; padding-left: 11px; } .size .px2 { width: 20px; } .size .lw { padding-left: 13px; }
.actions { display: flex; margin: 20px 0 0 -18px; }
.actions button { width: 75px; height: 26px; margin: 0 10px 0 0; padding: 4px 0 0; border: 1px solid #c8c8c8; border-radius: 4px; background: #fff; color: #333; font: 12.500px/18px "Noto Sans", sans-serif; letter-spacing: -.15px; }
.actions .all { width: 126px; margin-left: 6px; }
.overlay { position: absolute; left: 0; top: 0; pointer-events: none; }
```
